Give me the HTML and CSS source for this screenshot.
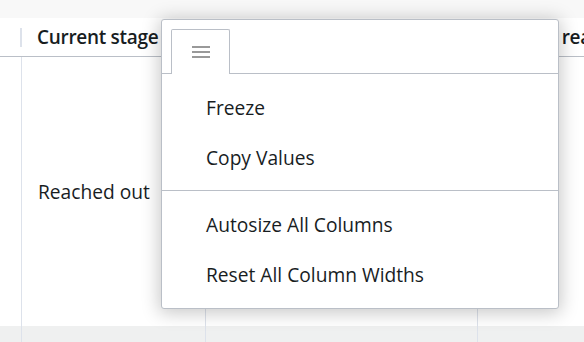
FILE: index.html
```html
<!DOCTYPE html>
<html>
<head>
  <title>Leads grid</title>
  <link rel="stylesheet" href="styles.css">
</head>
<body>
  <div class="grid">
    <div class="header-row">
      <div class="cell col-a"><span class="resize"></span></div>
      <div class="cell col-b head-text">Current stage</div>
      <div class="cell col-c"></div>
      <div class="cell col-d head-text">Status reached</div>
    </div>
    <div class="body-row">
      <div class="cell col-a"></div>
      <div class="cell col-b body-text">Reached out</div>
      <div class="cell col-c line"></div>
      <div class="cell col-d line"></div>
    </div>
    <div class="footer-row">
      <div class="cell col-a"></div>
      <div class="cell col-b"></div>
      <div class="cell col-c line"></div>
      <div class="cell col-d line"></div>
    </div>

    <!-- column menu -->
    <div class="menu">
      <div class="menu-header">
        <div class="tab">
          <svg width="18" height="14" viewBox="0 0 18 14">
            <rect x="0" y="1" width="18" height="2" fill="#999"/>
            <rect x="0" y="6" width="18" height="2" fill="#999"/>
            <rect x="0" y="11" width="18" height="2" fill="#999"/>
          </svg>
        </div>
      </div>
      <div class="menu-list">
        <div class="menu-item">Freeze</div>
        <div class="menu-item">Copy Values</div>
      </div>
      <div class="menu-sep"></div>
      <div class="menu-list">
        <div class="menu-item">Autosize All Columns</div>
        <div class="menu-item">Reset All Column Widths</div>
      </div>
    </div>
  </div>
</body>
</html>
```

FILE: styles.css
```css
body {
  margin: 0;
  background: #f8f8f8;
  font-family: "Open Sans", Arial, sans-serif;
  color: #181d1f;
  overflow: hidden;
}
.grid {
  position: relative;
  padding-top: 18px;
  width: 584px;
  height: 324px;
}
.header-row, .body-row, .footer-row {
  display: flex;
}
.header-row {
  height: 38px;
  background: #fff;
  border-bottom: 1px solid #babfc7;
}
.body-row {
  height: 269px;
  background: #fff;
}
.footer-row {
  height: 16px;
  background: #eff0f0;
}
.cell {
  box-sizing: border-box;
  display: flex;
  align-items: center;
  flex-shrink: 0;
}
.col-a {
  width: 21px;
  justify-content: flex-end;
}
.col-b {
  width: 184px;
  border-left: 1px solid #dde2eb;
  padding-left: 16px;
}
.header-row .col-b {
  border-left: none;
}
.col-c {
  width: 272px;
}
.col-d {
  width: 107px;
  padding-left: 17px;
  overflow: hidden;
  white-space: nowrap;
}
.header-row .col-d {
  padding-left: 24px;
}
.line {
  border-left: 1px solid #dde2eb;
}
.resize {
  width: 2px;
  height: 19px;
  background: #dde2eb;
  margin-right: -1px;
}
.head-text {
  font-weight: 600;
  font-size: 19px;
  letter-spacing: -0.3px;
}
.body-text {
  font-size: 19.2px;
}
.menu {
  position: absolute;
  left: 161px;
  top: 19px;
  width: 398px;
  height: 290px;
  box-sizing: border-box;
  background: #fff;
  border: 1px solid #babfc7;
  border-radius: 3px;
  box-shadow: 0 2px 18px 2px rgba(0, 0, 0, 0.22);
}
.menu-header {
  height: 54px;
  box-sizing: border-box;
  border-bottom: 1px solid #babfc7;
  padding: 9px 0 0 9px;
  display: flex;
}
.tab {
  width: 59px;
  height: 45px;
  box-sizing: border-box;
  border: 1px solid #babfc7;
  border-bottom: none;
  border-radius: 2px 2px 0 0;
  background: #fff;
  display: flex;
  justify-content: center;
  padding-top: 15px;
}
.tab svg {
  display: block;
}
.menu-list {
  padding: 8px 0;
}
.menu-item {
  height: 50px;
  display: flex;
  align-items: center;
  padding-left: 44px;
  font-size: 19.2px;
}
.menu-sep {
  height: 1px;
  background: #babfc7;
}
```
